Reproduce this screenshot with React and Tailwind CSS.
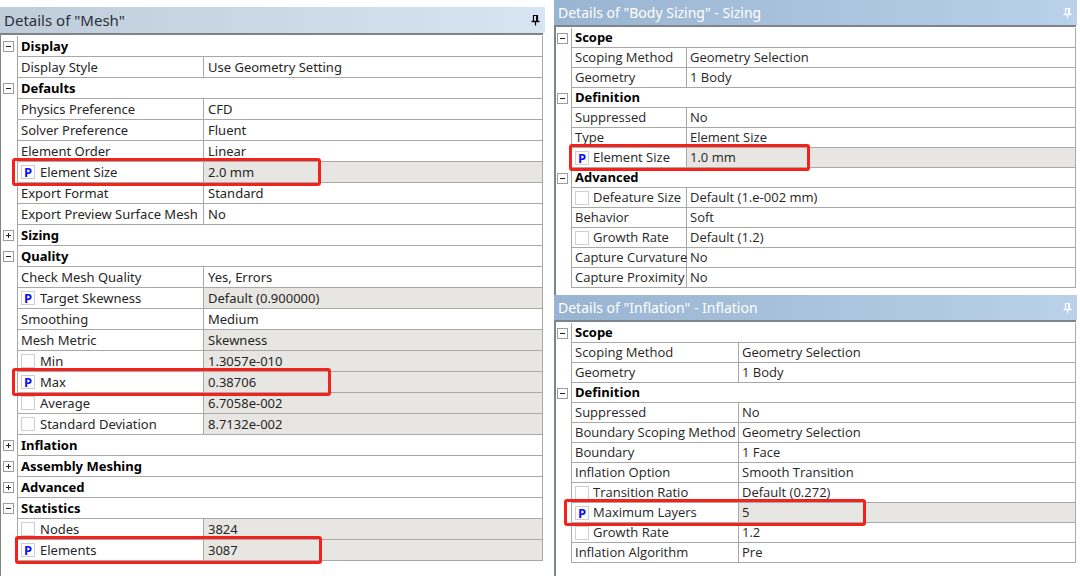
import { useState } from 'react';
import { clsx } from 'clsx';

const MESH_SECTIONS = [
  {
    name: 'Display',
    open: true,
    rows: [{ label: 'Display Style', value: 'Use Geometry Setting' }],
  },
  {
    name: 'Defaults',
    open: true,
    rows: [
      { label: 'Physics Preference', value: 'CFD' },
      { label: 'Solver Preference', value: 'Fluent' },
      { label: 'Element Order', value: 'Linear' },
      { label: 'Element Size', value: '2.0 mm', check: true, checked: true, locked: true, mark: '-left-[6px] w-[309px]' },
      { label: 'Export Format', value: 'Standard' },
      { label: 'Export Preview Surface Mesh', value: 'No' },
    ],
  },
  { name: 'Sizing', open: false, rows: [] },
  {
    name: 'Quality',
    open: true,
    rows: [
      { label: 'Check Mesh Quality', value: 'Yes, Errors' },
      { label: 'Target Skewness', value: 'Default (0.900000)', check: true, checked: true, locked: true },
      { label: 'Smoothing', value: 'Medium' },
      { label: 'Mesh Metric', value: 'Skewness', locked: true },
      { label: 'Min', value: '1.3057e-010', check: true, locked: true },
      { label: 'Max', value: '0.38706', check: true, checked: true, locked: true, mark: '-left-[6px] w-[319px]' },
      { label: 'Average', value: '6.7058e-002', check: true, locked: true },
      { label: 'Standard Deviation', value: '8.7132e-002', check: true, locked: true },
    ],
  },
  { name: 'Inflation', open: false, rows: [] },
  { name: 'Assembly Meshing', open: false, rows: [] },
  { name: 'Advanced', open: false, rows: [] },
  {
    name: 'Statistics',
    open: true,
    rows: [
      { label: 'Nodes', value: '3824', check: true, locked: true },
      { label: 'Elements', value: '3087', check: true, checked: true, locked: true, mark: '-left-[3px] w-[307px]' },
    ],
  },
];

const SIZING_SECTIONS = [
  {
    name: 'Scope',
    open: true,
    rows: [
      { label: 'Scoping Method', value: 'Geometry Selection' },
      { label: 'Geometry', value: '1 Body' },
    ],
  },
  {
    name: 'Definition',
    open: true,
    rows: [
      { label: 'Suppressed', value: 'No' },
      { label: 'Type', value: 'Element Size' },
      { label: 'Element Size', value: '1.0 mm', check: true, checked: true, locked: true, mark: '-left-[3px] w-[241px]' },
    ],
  },
  {
    name: 'Advanced',
    open: true,
    rows: [
      { label: 'Defeature Size', value: 'Default (1.e-002 mm)', check: true },
      { label: 'Behavior', value: 'Soft' },
      { label: 'Growth Rate', value: 'Default (1.2)', check: true },
      { label: 'Capture Curvature', value: 'No' },
      { label: 'Capture Proximity', value: 'No' },
    ],
  },
];

const INFLATION_SECTIONS = [
  {
    name: 'Scope',
    open: true,
    rows: [
      { label: 'Scoping Method', value: 'Geometry Selection' },
      { label: 'Geometry', value: '1 Body' },
    ],
  },
  {
    name: 'Definition',
    open: true,
    rows: [
      { label: 'Suppressed', value: 'No' },
      { label: 'Boundary Scoping Method', value: 'Geometry Selection' },
      { label: 'Boundary', value: '1 Face' },
      { label: 'Inflation Option', value: 'Smooth Transition' },
      { label: 'Transition Ratio', value: 'Default (0.272)', check: true },
      { label: 'Maximum Layers', value: '5', check: true, checked: true, locked: true, mark: '-left-[8px] w-[302px]' },
      { label: 'Growth Rate', value: '1.2', check: true },
      { label: 'Inflation Algorithm', value: 'Pre' },
    ],
  },
];

function PinIcon() {
  return (
    <svg width="9" height="12" viewBox="0 0 9 12" fill="none" stroke="currentColor" aria-hidden="true">
      <path d="M2.5 7V1.5H6.5V7" strokeWidth="1.2" />
      <path d="M6 1.5V7" strokeWidth="1.8" />
      <path d="M0.5 7.5H8.5" strokeWidth="1.4" />
      <path d="M4.5 8V11.5" strokeWidth="1.2" />
    </svg>
  );
}

function ParamCheck({ id, defaultChecked }) {
  const [checked, setChecked] = useState(Boolean(defaultChecked));

  return (
    <span className="grid size-[14px] shrink-0 place-items-center">
      <input
        type="checkbox"
        id={id}
        checked={checked}
        onChange={(e) => setChecked(e.target.checked)}
        className="col-start-1 row-start-1 size-[14px] appearance-none border border-[#cfcfcf] bg-white"
      />
      {checked && (
        <span className="pointer-events-none col-start-1 row-start-1 text-[13px] leading-[14px] font-bold text-[#1010f0]">P</span>
      )}
    </span>
  );
}

function Section({ panelId, section, size }) {
  const [open, setOpen] = useState(section.open);
  const rowHeight = size === 'lg' ? 'h-[21px]' : 'h-5';

  return (
    <tbody>
      <tr className={rowHeight}>
        <td className="border-r border-[#a8a8a8] p-0">
          <button
            type="button"
            aria-label={section.name}
            aria-expanded={open}
            onClick={() => setOpen(!open)}
            className={clsx('flex size-[11px] items-center justify-center border border-[#9c9c9c] text-[#222]', size === 'lg' ? 'ml-[2px]' : 'ml-[1px]')}
          >
            <svg width="7" height="7" viewBox="0 0 7 7" stroke="currentColor" aria-hidden="true">
              <path d="M1 3.5H6" />
              {!open && <path d="M3.5 1V6" />}
            </svg>
          </button>
        </td>
        <th colSpan={2} scope="rowgroup" className="border-b border-[#a8a8a8] p-0 pl-[3px] text-left font-bold text-black">
          {section.name}
        </th>
      </tr>
      {open && section.rows.map((row) => {
        const id = `${panelId}-${row.label.replaceAll(' ', '-').toLowerCase()}`;
        return (
          <tr key={row.label} className={rowHeight}>
            <td className="border-r border-[#a8a8a8] p-0" />
            <th scope="row" className="relative border-r border-b border-[#a8a8a8] p-0 pl-[3px] text-left font-normal">
              {row.check ? (
                <div className={clsx('flex items-center', size === 'lg' ? 'gap-[5px]' : 'gap-1')}>
                  <ParamCheck id={id} defaultChecked={row.checked} />
                  <label htmlFor={id}>{row.label}</label>
                </div>
              ) : row.label}
              {row.mark && (
                <span className={clsx('pointer-events-none absolute -inset-y-[4px] z-10 rounded-[3px] border-3 border-[#f5221b]', row.mark)} />
              )}
            </th>
            <td
              className={clsx(
                'border-b border-[#a8a8a8] p-0',
                size === 'lg' ? 'pl-1' : 'pl-[3px]',
                row.locked && 'bg-[#e7e6e2]'
              )}
            >
              {row.value}
            </td>
          </tr>
        );
      })}
    </tbody>
  );
}

function DetailsPanel({ id, title, sections, size, active, gutter, labelWidth, className }) {
  return (
    <section className={className}>
      <header
        className={clsx(
          'flex items-center justify-between bg-linear-to-r pr-[5px] pl-1',
          size === 'lg' ? 'h-[26px] text-[15px]' : 'h-[25px] text-sm',
          active ? 'from-[#99b4d1] to-[#b9d1ea] text-white' : 'from-[#bfcddb] to-[#d7e4f2] text-[#2a2f36]'
        )}
      >
        <h2>{title}</h2>
        <button type="button" aria-label="Pin" className={active ? 'text-white' : 'text-black'}>
          <PinIcon />
        </button>
      </header>
      <div className={clsx('border-t-2 border-[#7f8489] pt-px', size === 'lg' ? 'mr-[2px] border-l' : 'mr-px border-l-2')}>
        <table
          className={clsx(
            'w-full table-fixed border-separate border-spacing-0 border-r border-[#a8a8a8] text-[13px] whitespace-nowrap text-[#262626]',
            size === 'lg' ? 'leading-5' : "font-['Open_Sans','Noto_Sans',sans-serif] leading-[19px]"
          )}
        >
          <colgroup>
            <col className={gutter} />
            <col className={labelWidth} />
            <col />
          </colgroup>
          {sections.map((section) => (
            <Section key={section.name} panelId={id} section={section} size={size} />
          ))}
        </table>
      </div>
    </section>
  );
}

export default function App() {
  return (
    <main className="grid min-h-screen grid-cols-[545fr_523fr] gap-[9px] bg-white pr-[3px] font-['Noto_Sans','Open_Sans',sans-serif]">
      <div className="flex flex-col pt-[7px]">
        <DetailsPanel
          id="mesh"
          title={'Details of "Mesh"'}
          sections={MESH_SECTIONS}
          size="lg"
          gutter="w-[17px]"
          labelWidth="w-[186px]"
          className="flex grow flex-col [&>div]:grow"
        />
      </div>
      <div className="flex flex-col">
        <DetailsPanel
          id="sizing"
          title={'Details of "Body Sizing" - Sizing'}
          sections={SIZING_SECTIONS}
          size="md"
          active
          gutter="w-4"
          labelWidth="w-[115px]"
          className="[&>div]:pb-[7px]"
        />
        <DetailsPanel
          id="inflation"
          title={'Details of "Inflation" - Inflation'}
          sections={INFLATION_SECTIONS}
          size="md"
          active
          gutter="w-4"
          labelWidth="w-[167px]"
          className="flex grow flex-col [&>div]:grow"
        />
      </div>
    </main>
  );
}
